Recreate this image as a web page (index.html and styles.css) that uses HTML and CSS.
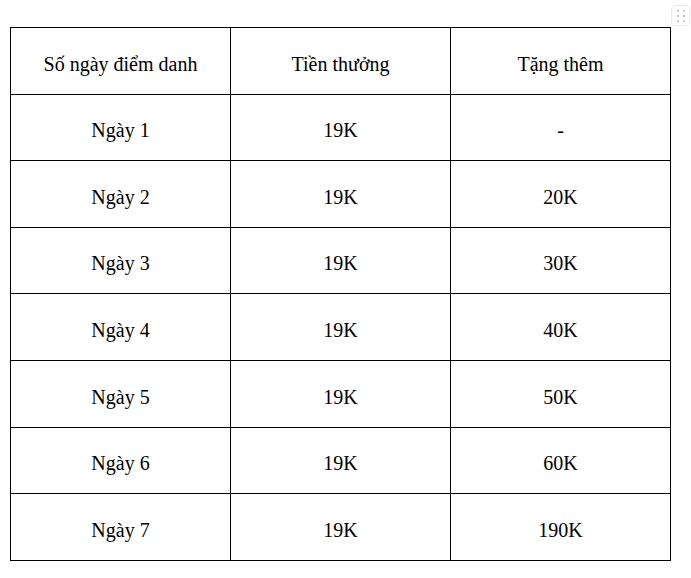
FILE: index.html
```html
<!DOCTYPE html>
<html lang="vi">
<head>
<meta charset="utf-8">
<title>Điểm danh</title>
<link rel="stylesheet" href="styles.css">
</head>
<body>
<div class="page">
  <div class="handle" aria-hidden="true">
    <span class="dot"></span><span class="dot"></span>
    <span class="dot"></span><span class="dot"></span>
    <span class="dot"></span><span class="dot"></span>
  </div>
  <div class="table">
    <div class="cell r67">Số ngày điểm danh</div>
    <div class="cell r67">Tiền thưởng</div>
    <div class="cell r67">Tặng thêm</div>

    <div class="cell">Ngày 1</div>
    <div class="cell">19K</div>
    <div class="cell">-</div>

    <div class="cell">Ngày 2</div>
    <div class="cell">19K</div>
    <div class="cell">20K</div>

    <div class="cell">Ngày 3</div>
    <div class="cell">19K</div>
    <div class="cell">30K</div>

    <div class="cell">Ngày 4</div>
    <div class="cell">19K</div>
    <div class="cell">40K</div>

    <div class="cell">Ngày 5</div>
    <div class="cell">19K</div>
    <div class="cell">50K</div>

    <div class="cell">Ngày 6</div>
    <div class="cell">19K</div>
    <div class="cell">60K</div>

    <div class="cell">Ngày 7</div>
    <div class="cell">19K</div>
    <div class="cell">190K</div>
  </div>
</div>
</body>
</html>
```
FILE: styles.css
```css
html, body {
  margin: 0;
  padding: 0;
  background: #ffffff;
}

body {
  font-family: "Liberation Serif", "Times New Roman", serif;
  font-size: 20px;
  color: #000000;
  overflow: hidden;
}

.page {
  position: relative;
  width: 691px;
  height: 578px;
  padding: 27px 0 0 10px;
  box-sizing: border-box;
}

.table {
  display: grid;
  grid-template-columns: 220px 220px 220px;
  grid-template-rows: 67px 66px 67px 66px 67px 67px 66px 67px;
  width: 661px;
  border-top: 1px solid #000;
  border-left: 1px solid #000;
  box-sizing: border-box;
}

.cell {
  display: flex;
  align-items: center;
  justify-content: center;
  border-right: 1px solid #000;
  border-bottom: 1px solid #000;
  padding-top: 6px;
  box-sizing: border-box;
  line-height: normal;
  white-space: nowrap;
}

.handle {
  position: absolute;
  left: 671px;
  top: 5px;
  width: 19px;
  height: 21px;
  box-sizing: border-box;
  border: 1px solid #ececec;
  border-radius: 4px;
  background: #ffffff;
  display: grid;
  grid-template-columns: 2px 2px;
  grid-template-rows: 2px 2px 2px;
  column-gap: 4px;
  row-gap: 3px;
  justify-content: center;
  align-content: center;
}

.dot {
  width: 2px;
  height: 2px;
  background: #b4b4b4;
  border-radius: 1px;
}
```
